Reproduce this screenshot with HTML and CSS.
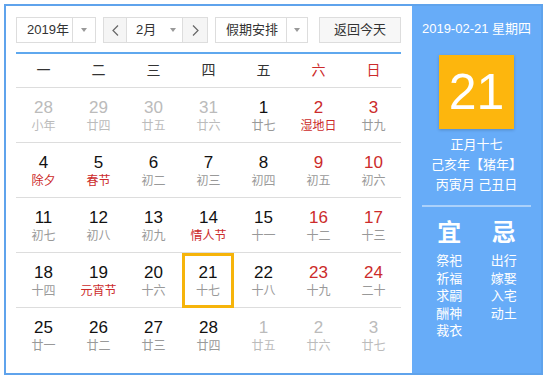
FILE: index.html
```html
<!DOCTYPE html>
<html lang="zh-CN">
<head>
  <meta charset="UTF-8" />
  <title>万年历</title>
  <link rel="stylesheet" href="styles.css">
</head>
<body>
  <div class="calendar">
    <div class="main">
      <div class="toolbar">
        <div class="select year-select">
          <span class="select-text">2019年</span>
          <span class="select-arrow"><i class="caret"></i></span>
        </div>
        <div class="select month-select">
          <span class="nav-btn">
            <svg width="7" height="11" viewBox="0 0 7 11"><polyline points="6,0.5 1,5.5 6,10.5" /></svg>
          </span>
          <span class="month-text">2月<i class="caret"></i></span>
          <span class="nav-btn">
            <svg width="7" height="11" viewBox="0 0 7 11"><polyline points="1,0.5 6,5.5 1,10.5" /></svg>
          </span>
        </div>
        <div class="select holiday-select">
          <span class="select-text">假期安排</span>
          <span class="select-arrow"><i class="caret"></i></span>
        </div>
        <div class="today-btn">返回今天</div>
      </div>

      <div class="week-head">
        <span>一</span><span>二</span><span>三</span><span>四</span><span>五</span>
        <span class="red">六</span><span class="red">日</span>
      </div>

      <div class="week">
        <div class="day other"><b>28</b><em>小年</em></div>
        <div class="day other"><b>29</b><em>廿四</em></div>
        <div class="day other"><b>30</b><em>廿五</em></div>
        <div class="day other"><b>31</b><em>廿六</em></div>
        <div class="day"><b>1</b><em>廿七</em></div>
        <div class="day weekend"><b>2</b><em class="fest">湿地日</em></div>
        <div class="day weekend"><b>3</b><em>廿九</em></div>
      </div>
      <div class="week">
        <div class="day"><b>4</b><em class="fest">除夕</em></div>
        <div class="day"><b>5</b><em class="fest">春节</em></div>
        <div class="day"><b>6</b><em>初二</em></div>
        <div class="day"><b>7</b><em>初三</em></div>
        <div class="day"><b>8</b><em>初四</em></div>
        <div class="day weekend"><b>9</b><em>初五</em></div>
        <div class="day weekend"><b>10</b><em>初六</em></div>
      </div>
      <div class="week">
        <div class="day"><b>11</b><em>初七</em></div>
        <div class="day"><b>12</b><em>初八</em></div>
        <div class="day"><b>13</b><em>初九</em></div>
        <div class="day"><b>14</b><em class="fest">情人节</em></div>
        <div class="day"><b>15</b><em>十一</em></div>
        <div class="day weekend"><b>16</b><em>十二</em></div>
        <div class="day weekend"><b>17</b><em>十三</em></div>
      </div>
      <div class="week">
        <div class="day"><b>18</b><em>十四</em></div>
        <div class="day"><b>19</b><em class="fest">元宵节</em></div>
        <div class="day"><b>20</b><em>十六</em></div>
        <div class="day today"><b>21</b><em>十七</em></div>
        <div class="day"><b>22</b><em>十八</em></div>
        <div class="day weekend"><b>23</b><em>十九</em></div>
        <div class="day weekend"><b>24</b><em>二十</em></div>
      </div>
      <div class="week last">
        <div class="day"><b>25</b><em>廿一</em></div>
        <div class="day"><b>26</b><em>廿二</em></div>
        <div class="day"><b>27</b><em>廿三</em></div>
        <div class="day"><b>28</b><em>廿四</em></div>
        <div class="day other"><b>1</b><em>廿五</em></div>
        <div class="day other"><b>2</b><em>廿六</em></div>
        <div class="day other"><b>3</b><em>廿七</em></div>
      </div>
    </div>

    <div class="side">
      <div class="side-date">2019-02-21 星期四</div>
      <div class="big-day">21</div>
      <div class="lunar">
        <div>正月十七</div>
        <div>己亥年【猪年】</div>
        <div>丙寅月 己丑日</div>
      </div>
      <div class="side-line"></div>
      <div class="almanac">
        <div class="almanac-col">
          <strong>宜</strong>
          <span>祭祀</span><span>祈福</span><span>求嗣</span><span>酬神</span><span>裁衣</span>
        </div>
        <div class="almanac-col">
          <strong>忌</strong>
          <span>出行</span><span>嫁娶</span><span>入宅</span><span>动土</span>
        </div>
      </div>
    </div>
  </div>
</body>
</html>
```

FILE: styles.css
```css
:root {
  --blue: #67acf8;
  --frame: #5fa3ec;
  --red: #cc2b2b;
  --gold: #f6b40a;
  --muted: #999;
  --faint: #bbb;
}

* { box-sizing: border-box; margin: 0; padding: 0; }

body {
  font-family: "Liberation Sans", "Noto Sans CJK SC", sans-serif;
  background: #fff;
  color: #333;
}

.calendar {
  display: flex;
  width: 539px;
  height: 371px;
  margin: 4px;
  border: 2px solid var(--frame);
}

.main {
  width: 406px;
  padding: 11px 11px 0 10px;
}

/* toolbar */
.toolbar {
  display: flex;
  box-sizing: content-box;
  height: 26px;
  padding-bottom: 9px;
  border-bottom: 2px solid #5fa8ee;
}

.select {
  display: flex;
  height: 26px;
  border: 1px solid #ddd;
  font-size: 13px;
  line-height: 24px;
  color: #333;
}

.select-text {
  padding-left: 10px;
  border-right: 1px solid #ddd;
}

.select-arrow {
  display: flex;
  align-items: center;
  justify-content: center;
}

.caret {
  display: inline-block;
  width: 0;
  height: 0;
  border-left: 3px solid transparent;
  border-right: 3px solid transparent;
  border-top: 4px solid #999;
}

.year-select { width: 80px; }
.year-select .select-text { width: 56px; }
.year-select .select-arrow { flex: 1; }

.month-select {
  width: 105px;
  margin-left: 7px;
}

.nav-btn {
  display: flex;
  align-items: center;
  justify-content: center;
  width: 23px;
  background: #f5f5f5;
}
.nav-btn:last-child { width: 25px; border-left: 1px solid #ddd; }
.nav-btn:first-child { border-right: 1px solid #ddd; }

.nav-btn svg polyline {
  fill: none;
  stroke: #666;
  stroke-width: 1.2;
}

.month-text {
  display: flex;
  align-items: center;
  justify-content: space-between;
  flex: 1;
  padding: 0 6px 0 9px;
}

.holiday-select {
  width: 93px;
  margin-left: 7px;
}
.holiday-select .select-text { width: 71px; }
.holiday-select .select-arrow { flex: 1; }

.today-btn {
  width: 82px;
  height: 26px;
  margin-left: 11px;
  border: 1px solid #ddd;
  background: #f7f7f7;
  font-size: 13px;
  line-height: 24px;
  text-align: center;
  color: #333;
}

/* grid */
.week-head, .week {
  display: grid;
  grid-template-columns: repeat(7, 55px);
}

.week-head {
  height: 34px;
  border-bottom: 1px solid #ddd;
  font-size: 14px;
  line-height: 33px;
  text-align: center;
  color: #333;
}

.red { color: var(--red); }

.week {
  height: 55px;
  border-bottom: 1px solid #ddd;
}
.week.last { border-bottom: none; }

.day {
  display: flex;
  flex-direction: column;
  align-items: center;
  padding-top: 10px;
}

.day b {
  font-weight: normal;
  font-size: 17px;
  line-height: 20px;
  color: #111;
}

.day em {
  font-style: normal;
  font-size: 12px;
  line-height: 16px;
  color: var(--muted);
}

.day.weekend b { color: var(--red); }
.day em.fest { color: var(--red); }

.day.other b,
.day.other em { color: var(--faint); }

.day.today {
  margin: 0 2px -1px 1px;
  padding-top: 7px;
  border: 3px solid var(--gold);
}

/* side panel */
.side {
  flex: 1;
  padding: 0 10px;
  background: var(--blue);
  color: #fff;
  text-align: center;
}

.side-date {
  margin: 0 -10px;
  padding-top: 14px;
  font-size: 13px;
  line-height: 18px;
  white-space: nowrap;
}

.big-day {
  width: 75px;
  height: 74px;
  margin: 17px auto 0;
  background: #fdb60d;
  box-shadow: 0 1px 3px rgba(0, 0, 0, 0.2);
  font-size: 50px;
  line-height: 74px;
}

.lunar {
  margin-top: 6px;
  font-size: 13px;
  line-height: 20px;
}

.side-line {
  height: 2px;
  margin-top: 10px;
  background: rgba(255, 255, 255, 0.45);
}

.almanac {
  display: flex;
  margin-top: 13px;
}

.almanac-col {
  display: flex;
  flex-direction: column;
  align-items: center;
  flex: 1;
  font-size: 13px;
  line-height: 17.5px;
}

.almanac-col strong {
  margin-bottom: 6px;
  font-size: 24px;
  line-height: 26px;
}
```
